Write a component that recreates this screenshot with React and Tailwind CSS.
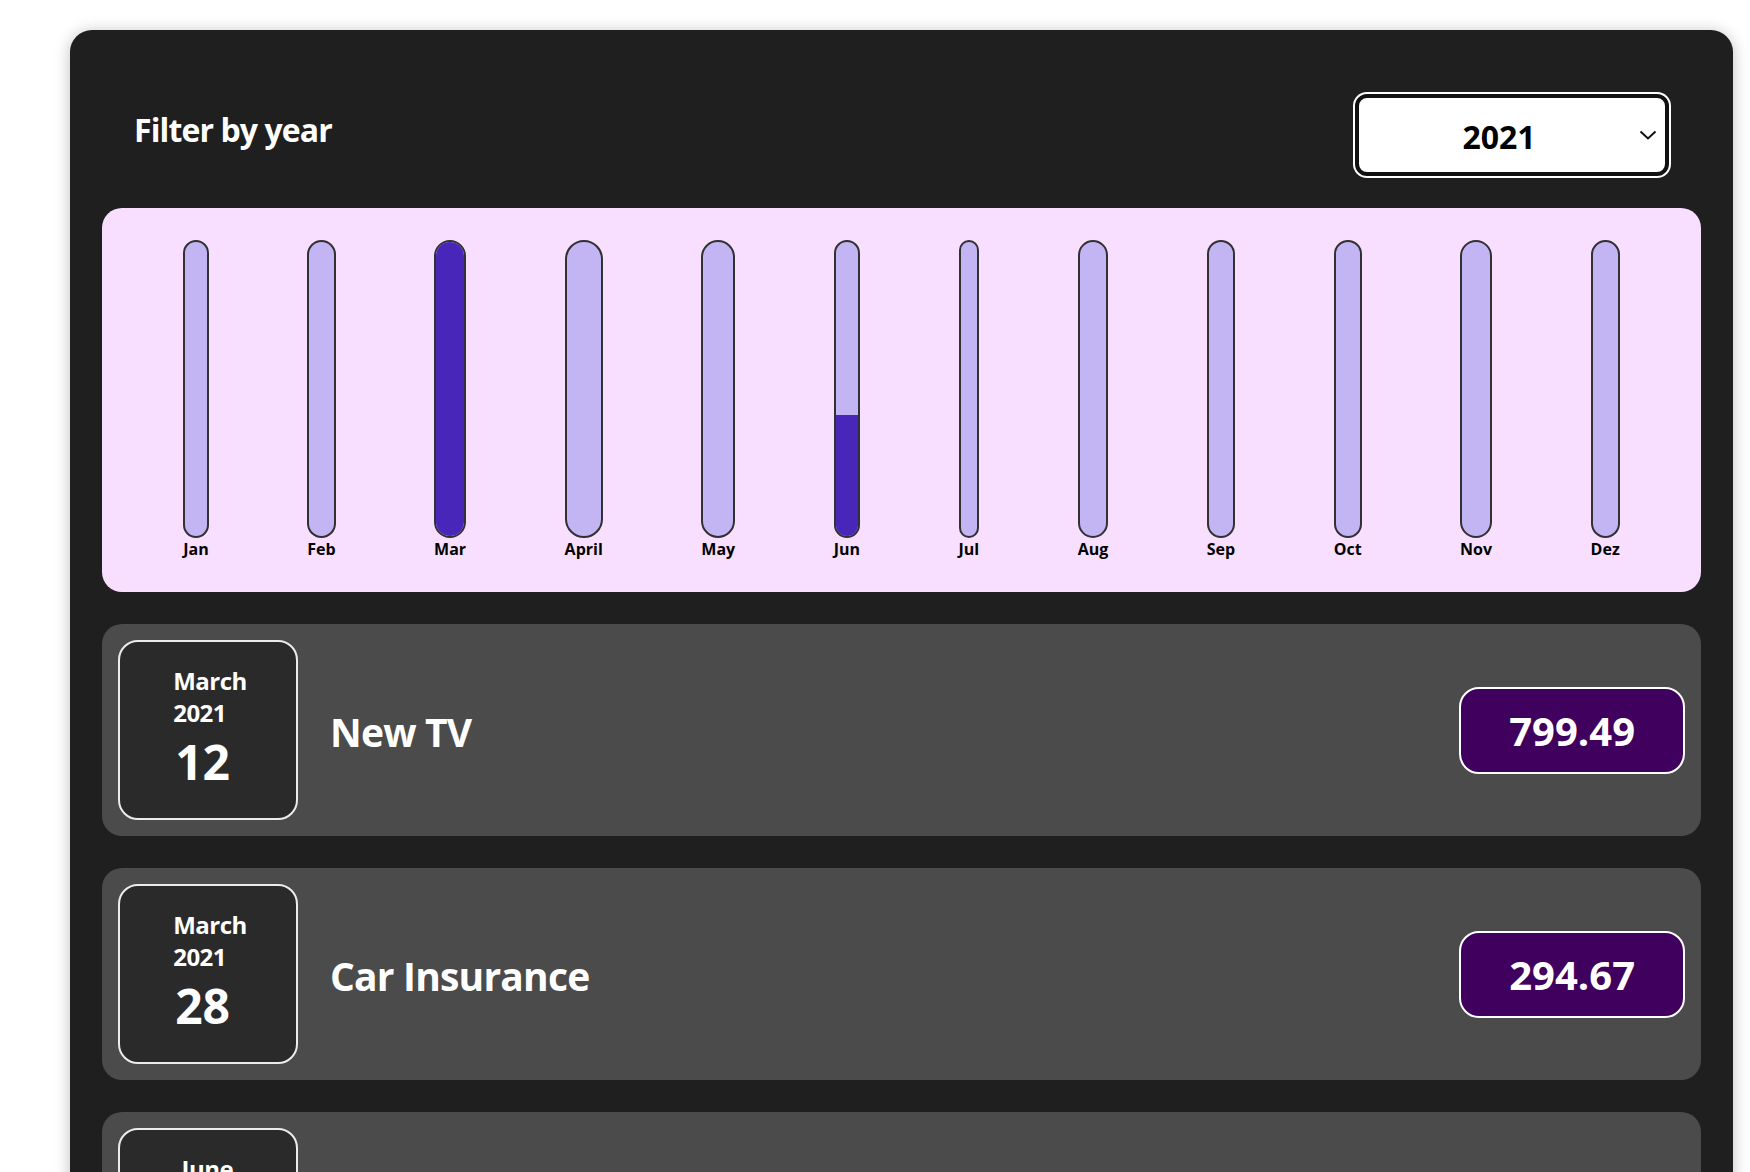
import React, { useState } from 'react';

const MONTHS = ['Jan', 'Feb', 'Mar', 'April', 'May', 'Jun', 'Jul', 'Aug', 'Sep', 'Oct', 'Nov', 'Dez'];

const expenses = [
  { id: 'e2', title: 'New TV', amount: 799.49, monthIndex: 2, month: 'March', year: '2021', day: '12' },
  { id: 'e3', title: 'Car Insurance', amount: 294.67, monthIndex: 2, month: 'March', year: '2021', day: '28' },
  { id: 'e4', title: 'New Desk (Wooden)', amount: 450, monthIndex: 5, month: 'June', year: '2021', day: '12' },
];

const ChartBar = ({ label, value, max }) => {
  const fill = max > 0 ? Math.round((value / max) * 100) + '%' : '0%';
  return (
    <div className="flex h-full flex-col items-center">
      <div className="flex w-full flex-1 flex-col justify-end overflow-hidden rounded-[24px] border-2 border-[#313131] bg-[#c3b4f3]">
        <div className="w-full bg-[#4826b9]" style={{ height: fill }} />
      </div>
      <div className="text-[16px] font-bold leading-[22px] text-black">{label}</div>
    </div>
  );
};

const Chart = ({ items }) => {
  // sum up per month
  const values = MONTHS.map((_, i) =>
    items.filter((e) => e.monthIndex === i).reduce((s, e) => s + e.amount, 0)
  );
  const max = Math.max(...values);

  return (
    <div className="flex h-[384px] justify-around rounded-[20px] bg-[#f8dfff] p-8">
      {MONTHS.map((m, i) => (
        <ChartBar key={m} label={m} value={values[i]} max={max} />
      ))}
    </div>
  );
};

const ExpenseDate = ({ month, year, day }) => (
  <div className="flex h-[180px] w-[180px] shrink-0 items-center justify-center rounded-[20px] border-2 border-[#ececec] bg-[#2a2a2a] text-white">
    <div className="ml-[4px]">
      <div className="text-[24px] font-bold leading-[32px] tracking-[-0.5px]">{month}</div>
      <div className="text-[24px] font-bold leading-[32px] tracking-[-0.5px]">{year}</div>
      <div className="pl-[2px] text-[48px] font-bold leading-[66px]">{day}</div>
    </div>
  </div>
);

const ExpenseItem = ({ expense }) => (
  <div className="mt-8 flex items-center rounded-[20px] bg-[#4b4b4b] p-4">
    <ExpenseDate month={expense.month} year={expense.year} day={expense.day} />
    <div className="flex flex-1 items-center">
      <h2 className="mx-8 mt-[4px] flex-1 text-[39px] font-bold leading-[52px] tracking-[-0.8px] text-white">
        {expense.title}
      </h2>
      <div className="rounded-[20px] border-2 border-white bg-[#40005d] px-12 py-4 text-[40px] font-bold leading-[51px] text-white">
        {expense.amount}
      </div>
    </div>
  </div>
);

const App = () => {
  const [year] = useState('2021');

  return (
    <div className="min-h-screen overflow-hidden bg-white pt-[30px] font-['Open_Sans',sans-serif]">
      <div className="ml-[70px] w-[1663px] rounded-[22px] bg-[#1f1f1f] p-8 shadow-[0_2px_16px_rgba(0,0,0,0.25)]">
        <div className="my-8 flex items-center justify-between px-8">
          <label className="mb-[10px] text-[32px] font-bold leading-[40px] tracking-[-0.9px] text-white">Filter by year</label>
          <div className="flex h-[82px] w-[314px] items-center rounded-[12px] border-4 border-[#111] bg-white ring-2 ring-white">
            <span className="mt-[4px] flex-1 text-center text-[32px] font-bold text-black">{year}</span>
            <svg className="mr-[8px]" width="18" height="10" viewBox="0 0 18 10" fill="none">
              <path d="M1.5 1.5l7.5 7l7.5-7" stroke="#111" strokeWidth="2" />
            </svg>
          </div>
        </div>

        <Chart items={expenses} />

        {expenses.map((e) => (
          <ExpenseItem key={e.id} expense={e} />
        ))}
      </div>
    </div>
  );
};

export default App;
